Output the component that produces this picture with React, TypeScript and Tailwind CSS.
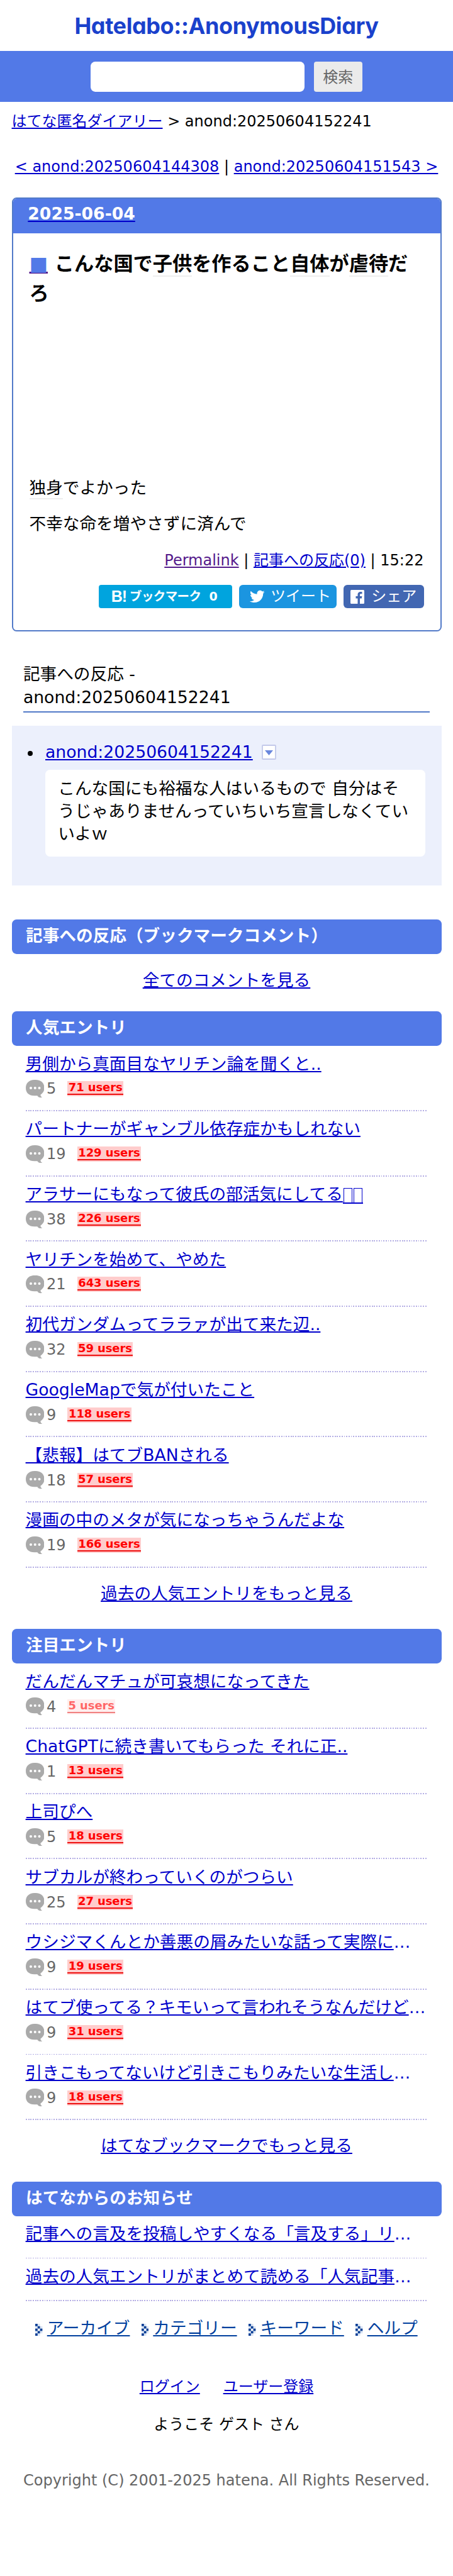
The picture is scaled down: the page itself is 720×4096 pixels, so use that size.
import React from "react";

type Entry = { title: string; boxes?: number; more?: boolean; comments: number; users: number; pale?: boolean };

const popular: Entry[] = [
  { title: "男側から真面目なヤリチン論を聞くと..", comments: 5, users: 71 },
  { title: "パートナーがギャンブル依存症かもしれない", comments: 19, users: 129 },
  { title: "アラサーにもなって彼氏の部活気にしてる", boxes: 2, comments: 38, users: 226 },
  { title: "ヤリチンを始めて、やめた", comments: 21, users: 643 },
  { title: "初代ガンダムってララァが出て来た辺..", comments: 32, users: 59 },
  { title: "GoogleMapで気が付いたこと", comments: 9, users: 118 },
  { title: "【悲報】はてブBANされる", comments: 18, users: 57 },
  { title: "漫画の中のメタが気になっちゃうんだよな", comments: 19, users: 166 },
];

const hot: Entry[] = [
  { title: "だんだんマチュが可哀想になってきた", comments: 4, users: 5, pale: true },
  { title: "ChatGPTに続き書いてもらった それに正..", comments: 1, users: 13 },
  { title: "上司ぴへ", comments: 5, users: 18 },
  { title: "サブカルが終わっていくのがつらい", comments: 25, users: 27 },
  { title: "ウシジマくんとか善悪の屑みたいな話って実際に", more: true, comments: 9, users: 19 },
  { title: "はてブ使ってる？キモいって言われそうなんだけど", more: true, comments: 9, users: 31 },
  { title: "引きこもってないけど引きこもりみたいな生活し", more: true, comments: 9, users: 18 },
];

const news = ["記事への言及を投稿しやすくなる「言及する」リ", "過去の人気エントリがまとめて読める「人気記事"];

function Link({ children, className = "text-[#0000cc]" }: { children: React.ReactNode; className?: string }) {
  return (
    <a href="#" className={`underline ${className}`}>
      {children}
    </a>
  );
}

function Dotted() {
  return (
    <div className="h-[1.9px] w-full bg-[repeating-linear-gradient(90deg,#b4aee4_0_1.85px,transparent_1.85px_3.69px)]" />
  );
}

// Stand-in for a character that no installed font can draw.
function MissingGlyph() {
  return (
    <span className="inline-block w-[16px] border-b-2 border-[#0000cc] px-[0.8px] align-[-6px] leading-none">
      <span className="block h-[23px] w-full border border-b-0 border-[#0000cc]" />
    </span>
  );
}

function Bubble() {
  return (
    <svg viewBox="0 0 48 46" className="h-[28.3px] w-[29.5px] shrink-0">
      <path
        fill="#aaaaaa"
        d="M22 0h4C40 0 48 9 48 21c0 8-4 14-10 17.500 0 3 1.500 5.500 4.500 6.500-5 2-10.500 0-12.500-4H22C8 41 0 33 0 21S8 0 22 0z"
      />
      <circle cx="13" cy="21" r="3.300" fill="#fff" />
      <circle cx="24" cy="21" r="3.300" fill="#fff" />
      <circle cx="35" cy="21" r="3.300" fill="#fff" />
    </svg>
  );
}

function Badge({ users, pale }: { users: number; pale?: boolean }) {
  const width = users > 99 ? "w-[101.500px]" : users > 9 ? "w-[88.600px]" : "w-[75.700px]";
  const tone = pale ? "bg-[#ffeeee] text-[#ff6666]" : "bg-[#ffcccc] text-[#ff0000]";
  const line = pale ? "bg-[#f08080]" : "bg-[#ee1111]";
  return (
    <a href="#" className={`flex h-[24px] flex-col overflow-hidden ${width} ${tone}`}>
      <span className="flex h-[20px] items-center justify-center whitespace-nowrap font-['DejaVu_Sans'] text-[18px] leading-[20px] font-bold tracking-[-0.1px]">
        {users} users
      </span>
      <span className={`h-[2px] w-full ${line}`} />
    </a>
  );
}

function SectionHeader({ children }: { children: React.ReactNode }) {
  return (
    <h2 className="h-[55.4px] rounded-[7.4px] bg-[#5279e7] pl-[22.5px] text-[26.67px] leading-[51.2px] font-bold text-white">
      {children}
    </h2>
  );
}

function EntryList({ entries }: { entries: Entry[] }) {
  return (
    <ul className="px-[22.1px]">
      {entries.map((e) => (
        <li key={e.title} className="flex h-[103.69px] flex-col pt-[10.4px]">
          <div className="h-[36px] text-[26.67px] leading-[36px] whitespace-nowrap text-[#0000cc]">
            <Link>
              {e.title}
              {Array.from({ length: e.boxes ?? 0 }, (_, i) => (
                <MissingGlyph key={i} />
              ))}
            </Link>
            {e.more && "…"}
          </div>
          <div className="mt-[7.7px] flex h-[28.3px] items-center">
            <Bubble />
            <span className="ml-[4px] text-[24px] leading-[28px] text-[#666666]">{e.comments}</span>
            <span className="ml-[18px]">
              <Badge users={e.users} pale={e.pale} />
            </span>
          </div>
          <div className="mt-auto">
            <Dotted />
          </div>
        </li>
      ))}
    </ul>
  );
}

function MoreLink({ children }: { children: React.ReactNode }) {
  return (
    <p className="text-center text-[26.67px] leading-[40px]">
      <Link>{children}</Link>
    </p>
  );
}

function PixelArrow() {
  const on = [
    [0, 0],
    [1, 1],
    [0, 2],
    [2, 2],
    [1, 3],
    [0, 4],
  ];
  const half = [
    [1, 0],
    [0, 1],
    [2, 1],
    [0, 3],
    [2, 3],
    [1, 4],
  ];
  return (
    <svg viewBox="0 0 3 5" className="mt-[4px] h-[19px] w-[11.4px] shrink-0">
      {half.map(([x, y]) => (
        <rect key={`h${x}${y}`} x={x} y={y} width="1" height="1" fill="#dbe5f4" />
      ))}
      {on.map(([x, y]) => (
        <rect key={`${x}${y}`} x={x} y={y} width="1" height="1" fill="#0a3f96" />
      ))}
    </svg>
  );
}

function Keyword({ children }: { children: React.ReactNode }) {
  return <span className="border-b-2 border-[#eeeeee] pb-px">{children}</span>;
}

export default function App() {
  return (
    <div
      lang="ja"
      className="min-h-[4096px] w-[720px] overflow-hidden bg-white font-['DejaVu_Sans','Noto_Sans_CJK_JP',sans-serif] text-black"
    >
      <header className="flex h-[81.2px] items-center justify-center">
        <h1 className="font-['Inter'] text-[36px] leading-[80px] font-bold tracking-[-0.4px] whitespace-nowrap text-[#1a41cc] [font-feature-settings:'cv11']">
          Hatelabo::AnonymousDiary
        </h1>
      </header>

      <form className="flex h-[81.3px] items-center justify-center gap-[15px] bg-[#5279e7]">
        <input aria-label="search" className="h-[48px] w-[339.4px] rounded-[7.4px] bg-white" />
        <button type="button" className="h-[48px] w-[77.4px] rounded-[4px] bg-[#ebebeb] pt-[2px] text-[24px] leading-[46px] text-[#666666]">
          検索
        </button>
      </form>

      <main className="px-[18.5px]">
        <p className="mt-[12.2px] text-[24px] leading-[36px] whitespace-nowrap">
          <Link>はてな匿名ダイアリー</Link> &gt; anond:20250604152241
        </p>
        <p className="mt-[36.2px] text-center text-[24px] leading-[36px] whitespace-nowrap">
          <Link>&lt; anond:20250604144308</Link> | <Link>anond:20250604151543 &gt;</Link>
        </p>

        <article className="mt-[30.9px] h-[690.5px] overflow-hidden rounded-[7.4px] border-2 border-[#527ac8]">
          <div className="-mx-[2px] -mt-[2px] h-[57.2px] bg-[#5279e7] pl-[25.8px] text-[26.67px] leading-[52px] font-bold">
            <a href="#" className="text-white underline decoration-[#0000cc]">
              2025-06-04
            </a>
          </div>
          <div className="px-[26px]">
            <h3 className="pt-[24.8px] text-[31.2px] leading-[46.8px] font-bold whitespace-nowrap">
              <a href="#" className="text-[#5279e7] underline decoration-[#551a8b]">
                ■
              </a>{" "}
              こんな国で<Keyword>子供</Keyword>を作ること<Keyword>自体</Keyword>が<Keyword>虐待</Keyword>だ
              <br />ろ
            </h3>
            <p className="mt-[266.4px] text-[26.67px] leading-[40px]">
              <Keyword>独身</Keyword>でよかった
            </p>
            <p className="mt-[17px] text-[26.67px] leading-[40px]">不幸な命を増やさずに済んで</p>
            <p className="mt-[19.9px] text-right text-[24px] leading-[36px]">
              <Link className="text-[#551a8b]">Permalink</Link> | <Link>記事への反応(0)</Link> | 15:22
            </p>
            <div className="mt-[21.6px] flex justify-end gap-[11px]">
              <a href="#" className="flex h-[37px] w-[212.4px] items-center rounded-[4px] bg-[#00a4de] pl-[20px] font-bold whitespace-nowrap text-white">
                <span className="font-['Liberation_Sans'] text-[25px] leading-[37px] tracking-[-1px]">B!</span>
                <span className="ml-[5px] text-[19.5px] leading-[37px] tracking-[-0.6px]">ブックマーク</span>
                <span className="ml-[13px] font-['DejaVu_Sans'] text-[19px] leading-[37px]">0</span>
              </a>
              <a href="#" className="flex h-[37px] w-[155.2px] items-center rounded-[6px] bg-[#1b95e0] pl-[16px] text-[24px] whitespace-nowrap text-white">
                <svg viewBox="0 0 24 24" className="mr-[9px] h-[25px] w-[25px]" fill="#fff">
                  <path d="M23.643 4.937c-.835.37-1.732.62-2.675.733.962-.576 1.700-1.490 2.048-2.578-.9.534-1.897.922-2.958 1.130-.85-.904-2.060-1.470-3.400-1.470-2.572 0-4.658 2.086-4.658 4.660 0 .364.042.718.120 1.060-3.873-.195-7.304-2.050-9.602-4.868-.4.690-.63 1.490-.63 2.342 0 1.616.823 3.043 2.072 3.878-.764-.025-1.482-.234-2.110-.583v.060c0 2.257 1.605 4.140 3.737 4.568-.392.106-.803.162-1.227.162-.3 0-.593-.028-.877-.082.593 1.850 2.313 3.198 4.352 3.234-1.595 1.250-3.604 1.995-5.786 1.995-.376 0-.747-.022-1.112-.065 2.062 1.323 4.510 2.093 7.140 2.093 8.570 0 13.255-7.098 13.255-13.254 0-.2-.005-.402-.014-.602.910-.658 1.700-1.477 2.323-2.410z" />
                </svg>
                <span className="leading-[37px]">ツイート</span>
              </a>
              <a href="#" className="flex h-[37px] w-[127.3px] items-center rounded-[6px] bg-[#4267b2] pl-[11px] text-[24px] whitespace-nowrap text-white">
                <svg viewBox="0 0 22 22" className="mr-[11px] h-[22px] w-[22px]">
                  <rect width="22" height="22" rx="1.500" fill="#fff" />
                  <path fill="#4267b2" d="M11.500 22v-8.500H8.500v-3.400h3V7.600c0-3 1.800-4.500 4.500-4.500 1.200 0 2.200.1 2.500.1v3h-1.700c-1.500 0-1.800.7-1.800 1.700v2.200h3.400l-.5 3.400H15V22z" />
                </svg>
                <span className="leading-[37px]">シェア</span>
              </a>
            </div>
          </div>
        </article>

        <div className="mx-[18.4px] mt-[49.8px] border-b-2 border-[#527ac8] pb-[3.6px] text-[26.67px] leading-[36.9px]">
          記事への反応 -
          <br />
          anond:20250604152241
        </div>

        <section className="mt-[20.3px] h-[254.5px] bg-[#ecf0fc] pt-[24.5px] pr-[25.800px] pl-[25.300px]">
          <div className="flex h-[36px] items-center text-[26.67px] leading-[36px]">
            <span className="mt-[3px] mr-[19.8px] h-[8.400px] w-[8.400px] rounded-full bg-black" />
            <Link>anond:20250604152241</Link>
            <svg viewBox="0 0 23 24" className="ml-[14px] h-[24px] w-[23px]">
              <rect x="1" y="1" width="21" height="22" rx="1" fill="#fff" stroke="#c3c9ea" strokeWidth="1.800" />
              <path d="M5 9h13l-6.500 8z" fill="#6a87dd" />
            </svg>
          </div>
          <div className="mt-[9.6px] ml-[28.2px] h-[138.500px] rounded-[7.4px] bg-white pt-[11.8px] pl-[20.3px] text-[26.67px] leading-[36px] whitespace-nowrap">
            こんな国にも裕福な人はいるもので 自分はそ
            <br />
            うじゃありませんっていちいち宣言しなくてい
            <br />
            いよｗ
          </div>
        </section>

        <section className="mt-[53.8px]">
          <SectionHeader>記事への反応（ブックマークコメント）</SectionHeader>
          <div className="mt-[21.2px]">
            <MoreLink>全てのコメントを見る</MoreLink>
          </div>
        </section>

        <section className="mt-[29.2px]">
          <SectionHeader>人気エントリ</SectionHeader>
          <EntryList entries={popular} />
          <div className="mt-[20.9px]">
            <MoreLink>過去の人気エントリをもっと見る</MoreLink>
          </div>
        </section>

        <section className="mt-[36.3px]">
          <SectionHeader>注目エントリ</SectionHeader>
          <EntryList entries={hot} />
          <div className="mt-[20.9px]">
            <MoreLink>はてなブックマークでもっと見る</MoreLink>
          </div>
        </section>

        <section className="mt-[36.700px]">
          <SectionHeader>はてなからのお知らせ</SectionHeader>
          <ul className="px-[22.1px]">
            {news.map((title) => (
              <li key={title} className="flex h-[67.4px] flex-col pt-[10.4px]">
                <div className="text-[26.67px] leading-[36px] whitespace-nowrap text-[#0000cc]">
                  <Link>{title}</Link>…
                </div>
                <div className="mt-auto">
                  <Dotted />
                </div>
              </li>
            ))}
          </ul>
        </section>
      </main>

      <footer>
        <nav className="mt-[23.2px] flex items-center justify-center gap-[18.500px] text-[26.67px] leading-[40px]">
          {["アーカイブ", "カテゴリー", "キーワード", "ヘルプ"].map((t) => (
            <span key={t} className="flex items-center gap-[7px]">
              <PixelArrow />
              <Link className="text-[#003f9e]">{t}</Link>
            </span>
          ))}
        </nav>
        <p className="mt-[55.4px] flex justify-center gap-[36.9px] text-[24px] leading-[36px]">
          <Link>ログイン</Link>
          <Link>ユーザー登録</Link>
        </p>
        <p className="mt-[23.9px] text-center text-[24px] leading-[36px]">ようこそ ゲスト さん</p>
        <p className="mt-[52.6px] text-center text-[24px] leading-[36px] whitespace-nowrap text-[#666666]">
          Copyright (C) 2001-2025 hatena. All Rights Reserved.
        </p>
      </footer>
    </div>
  );
}
